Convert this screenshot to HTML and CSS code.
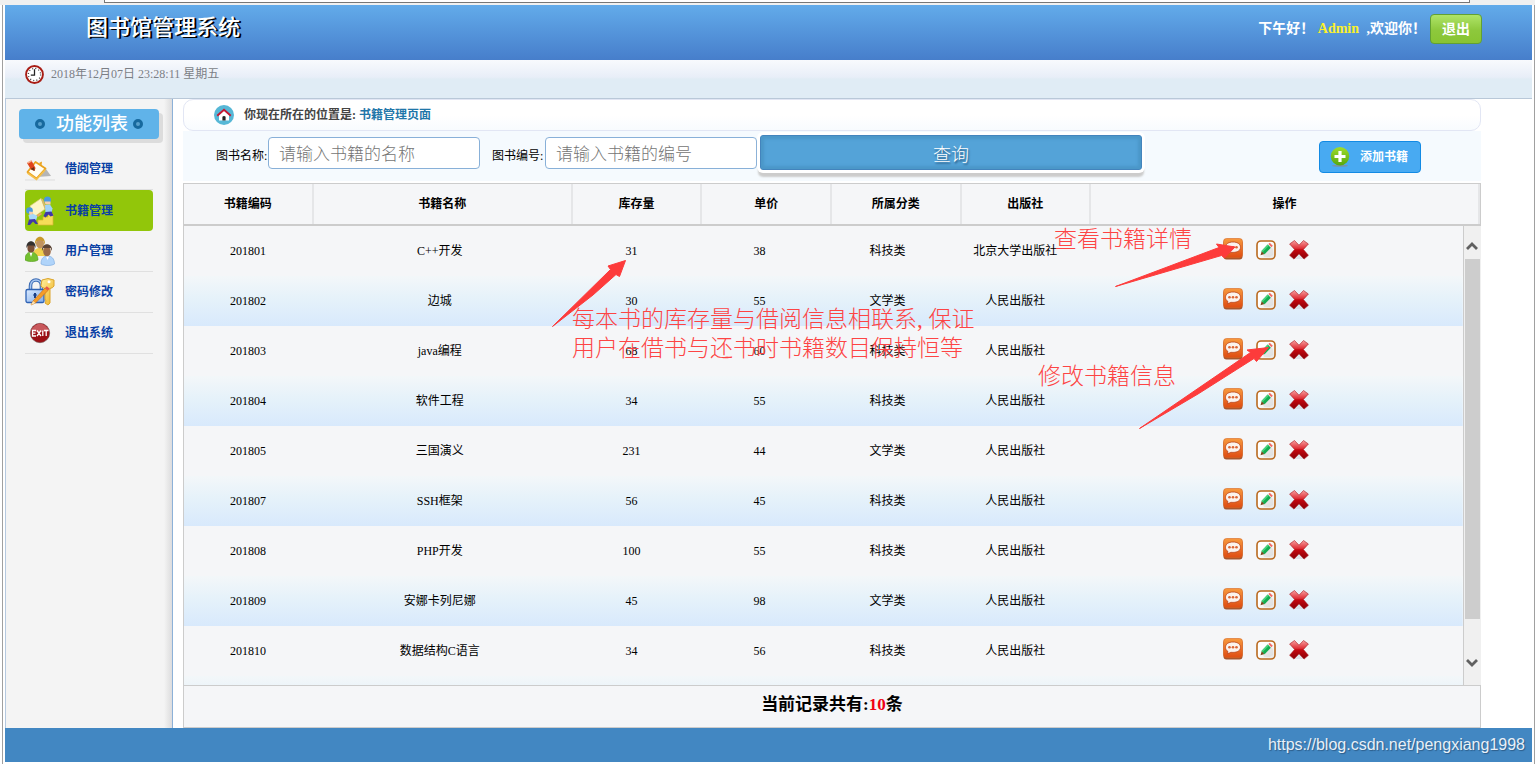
FILE: index.html
```html
<!DOCTYPE html>
<html lang="zh-CN">
<head>
<meta charset="utf-8">
<title>图书馆管理系统</title>
<link rel="stylesheet" href="styles.css">
</head>
<body>
<svg class="sprite" width="0" height="0" aria-hidden="true">
  <defs>
    <linearGradient id="orange" x1="0" y1="0" x2="0" y2="1"><stop offset="0" stop-color="#f79a3e"/><stop offset="1" stop-color="#df4c12"/></linearGradient>
    <linearGradient id="red" x1="0" y1="0" x2="0" y2="1"><stop offset="0" stop-color="#f6a0a0"/><stop offset=".42" stop-color="#e03038"/><stop offset=".5" stop-color="#c40810"/><stop offset="1" stop-color="#8a0006"/></linearGradient>
    <linearGradient id="green" x1="0" y1="0" x2="0" y2="1"><stop offset="0" stop-color="#9fdc2c"/><stop offset="1" stop-color="#56a80c"/></linearGradient>
    <linearGradient id="gold" x1="0" y1="0" x2="1" y2="1"><stop offset="0" stop-color="#fff0a0"/><stop offset="1" stop-color="#eeb020"/></linearGradient>
    <linearGradient id="steel" x1="0" y1="0" x2="1" y2="1"><stop offset="0" stop-color="#dcebff"/><stop offset="1" stop-color="#7fabea"/></linearGradient>
    <linearGradient id="paper" x1="0" y1="0" x2="1" y2="1"><stop offset=".4" stop-color="#fff"/><stop offset="1" stop-color="#e4e4e4"/></linearGradient>
    <symbol id="i-view" viewBox="0 0 20 22">
      <rect x="0.5" y="2" width="19" height="19.5" rx="3" fill="#a8552c"/>
      <rect x="0.5" y="0.5" width="19" height="19" rx="3" fill="url(#orange)" stroke="#d9641e" stroke-width=".6"/>
      <path d="M10 4c-4.800 0-7.500 2.300-7.500 5.300 0 1.900 1 3.400 2.500 4.300L4.500 16l3.300-1.700 2.200.1c4.800 0 7.500-2.200 7.500-5.100S14.800 4 10 4z" fill="#fbf3ee" stroke="#b9441c" stroke-width=".8"/>
      <circle cx="6.500" cy="9.300" r="1.300" fill="#dc6434"/><circle cx="10" cy="9.300" r="1.300" fill="#dc6434"/><circle cx="13.500" cy="9.300" r="1.300" fill="#dc6434"/>
    </symbol>
    <symbol id="i-edit" viewBox="0 0 20 20">
      <rect x="1" y="1" width="18" height="18" rx="4" fill="url(#paper)" stroke="#b9691f" stroke-width="1.600"/>
      <path d="M7 15l8-8 2 2v6l-3 2H8z" fill="#dadada" opacity=".6"/>
      <path d="M4.500 15.200l1.200-4.200 2.900 3z" fill="#7a4a20"/>
      <path d="M5.500 11l6.200-6.500 3.200 3.300-6.300 6.500z" fill="#14ac50"/><path d="M5.500 11l6.200-6.500 1.100 1.200-6 6.300z" fill="#48d47c"/>
      <path d="M12.300 4l1.500-1.300 3 3.100-1.400 1.400z" fill="#f06c68"/>
    </symbol>
    <symbol id="i-delete" viewBox="0 0 20 20">
      <path d="M4 19h12l-3-5H7z" fill="#cfd8e0" opacity=".6"/>
      <path d="M.6 4L5.500.5 10 5.200 14.500.5 19.400 4l-5 5.500 5 5.800-4.400 3.800-5-5.300-5 5.300-4.400-3.800 5-5.800z" fill="url(#red)" stroke="#a8141c" stroke-width=".6"/>
    </symbol>
  </defs>
</svg>

<div class="window">
  <div class="strip"><div class="strip-box"></div></div>
  <div class="app">
    <header class="top">
      <h1 class="brand">图书馆管理系统</h1>
      <p class="hello">下午好！ <span class="user">Admin</span> ,欢迎你！</p>
      <button class="logout" type="button">退出</button>
    </header>

    <div class="datebar">
      <svg class="clock" viewBox="0 0 18 18" aria-hidden="true">
        <circle cx="9" cy="9" r="8" fill="#fff" stroke="#a81c14" stroke-width="1.800"/>
        <circle cx="9" cy="9" r="5.800" fill="none" stroke="#444" stroke-width="1.200" stroke-dasharray="1 2.040"/>
        <path d="M9 4v5.500H5.500" fill="none" stroke="#222" stroke-width="1.200"/>
      </svg>
      <time>2018年12月07日 23:28:11 星期五</time>
    </div>

    <div class="middle">
      <aside class="side">
        <h2 class="side-title"><i class="dot"></i><span>功能列表</span><i class="dot"></i></h2>
        <nav class="menu">
          <a href="#"><svg viewBox="0 0 30 30" aria-hidden="true">
            <path d="M12 23l14-1-5-7z" fill="#b5b5b5"/><path d="M0 26h30" stroke="#ddd"/>
            <path d="M2.500 18l8-10 10 6.500-9 10z" fill="#fffdf2" stroke="#eaa21c" stroke-width="1.800" stroke-linejoin="round"/>
            <path d="M2.500 19l9 6.500L20 16" fill="none" stroke="#f5c04a" stroke-width="1.600"/>
            <path d="M14 9l3-1.500-.5 4z" fill="#eaa21c"/>
            <path d="M2 9l4.500-2.500 4 7.500-1 3-3.500-1.500z" fill="#e0451c"/><path d="M5.500 15l3.500-2 .6 4z" fill="#6a3418"/><path d="M2.500 9l4-2.200" stroke="#f7b090" stroke-width="1.500"/>
          </svg><span>借阅管理</span></a>
          <a href="#" class="current" aria-current="page"><svg viewBox="0 0 30 30" aria-hidden="true">
            <path d="M13 29V24h5v-3h5v-3h5v11z" fill="#f6dd58" stroke="#d8b430" stroke-width=".7"/>
            <path d="M5 10l11-7.500L20 13 9 21z" fill="#fdf5c6" stroke="#dccb80" stroke-width=".7"/><path d="M16 2.500l2 .8 4 9.700-2 .4z" fill="#d8b96c"/>
            <circle cx="22.500" cy="4" r="3.500" fill="#4a9be0"/><path d="M19.500 5.500h6v3h-5z" fill="#f7cfae"/><path d="M20 9l5-.5 2.500 4-1 5-6-.5z" fill="#9fd3f8"/><path d="M20.500 16l6-.5 2 4-3 1-2-2-3 3-2-1.500z" fill="#4038a8"/>
            <circle cx="4.500" cy="14.500" r="3.300" fill="#4a9be0"/><path d="M4 15.500l4 .5-.5 3-3 .5z" fill="#f7cfae"/><path d="M3.500 19l5-1 4 2-1.500 4.500-6 1z" fill="#a7d8fa"/><path d="M4 23.500l6-.5 3 5h-2.500L8 25.500 5 29H2.500z" fill="#4038a8"/><path d="M12 19l4-2 1 1-4 3z" fill="#f3a468"/>
          </svg><span>书籍管理</span></a>
          <a href="#"><svg viewBox="0 0 30 30" aria-hidden="true">
            <path d="M8 20c0-7 4-8 7-8s7 2 7 8z" fill="#f2d04c"/><ellipse cx="15" cy="7.500" rx="4" ry="5" fill="#c0925e"/><path d="M10 9c-1-11 11-11 10 0l-1.500-4q-3.500-1.500-7 0z" fill="#c8982c"/>
            <path d="M0 24c0-6 3-8 6-8s7 2 7 8c-3 2-10 2-13 0z" fill="#74c030" stroke="#4f9818" stroke-width=".6"/><path d="M4.500 16.500h3L6 21z" fill="#fff"/><ellipse cx="6" cy="12" rx="3.600" ry="4.500" fill="#7a5038"/><path d="M1.500 12c-1-9 10-9 9 0L9 9.500H3z" fill="#33302f"/>
            <path d="M16 28c0-6 3-8 6.500-8s7 2 7 8c-3 2-10 2-13.500 0z" fill="#b0d4fa" stroke="#78a8de" stroke-width=".6"/><path d="M21 20.500h3L22.500 24z" fill="#fff"/><ellipse cx="22" cy="15.500" rx="3.800" ry="4.800" fill="#9c6c48"/><path d="M17 15c-1-9 11-9 10 0l-1.500-3h-7z" fill="#5a4436"/>
          </svg><span>用户管理</span></a>
          <a href="#"><svg viewBox="0 0 30 30" aria-hidden="true">
            <path d="M5.500 14V9c0-8 11-8 11 0v5" fill="none" stroke="#3e6db4" stroke-width="3.600"/><path d="M5.500 14V9c0-8 11-8 11 0v5" fill="none" stroke="#a9c8f2" stroke-width="1.400"/>
            <rect x="1" y="12.500" width="18" height="13" rx="1.500" fill="url(#steel)" stroke="#2d62b4" stroke-width="1.300"/><path d="M10 16v5M8.500 18h3" stroke="#1b3f86" stroke-width="2"/>
            <path d="M17 3q6-3 12 0v6q-1 2-4 2.500V26l-2 2-3-2 1-2-1-2V11.500q-4-1-4-3z" fill="url(#gold)" stroke="#dba42c" stroke-width="1"/><circle cx="24" cy="4.800" r="1.500" fill="#fff"/>
            <path d="M8 24L20 11l3 2.500L10.500 26 6 28z" fill="#f59c28" stroke="#c46c10" stroke-width=".6"/><path d="M6 28l2-4 2.500 2z" fill="#f8e4b8"/><path d="M20 11l1.800-1.800 3 2.600L23 13.500z" fill="#e4574c"/>
          </svg><span>密码修改</span></a>
          <a href="#"><svg viewBox="0 0 30 30" aria-hidden="true">
            <circle cx="15" cy="15" r="9.700" fill="#9c1016" stroke="#6e5050" stroke-width=".6"/><path d="M6 12q9-13 18 0-9 4-18 0z" fill="#c8585c"/>
            <path d="M11 12.500H7.500v5.500H11M7.500 15.200h3M12 12.500l4 5.500M16 12.500l-4 5.500M17.800 12.500V18M19 12.500h4.500M21.200 12.500V18" fill="none" stroke="#fff" stroke-width="1.300"/>
          </svg><span>退出系统</span></a>
        </nav>
      </aside>

      <main class="content">
        <div class="crumb">
          <svg viewBox="0 0 20 20" aria-hidden="true"><circle cx="10" cy="10" r="10" fill="#56b7d6"/><path d="M5 10l5-4.500L15 10v5.500H5z" fill="#fff"/><path d="M3.200 10.800L10 4.800l6.800 6" fill="none" stroke="#c41a34" stroke-width="1.900"/><path d="M8.400 15.500v-3.700q1.600-1.800 3.200 0v3.700z" fill="#222"/></svg>
          <span>你现在所在的位置是: <a href="#">书籍管理页面</a></span>
        </div>

        <form class="search">
          <label for="bookName">图书名称:</label>
          <input id="bookName" type="text" placeholder="请输入书籍的名称">
          <label class="second" for="bookNo">图书编号:</label>
          <input id="bookNo" type="text" placeholder="请输入书籍的编号">
          <button class="query" type="button">查询</button>
          <a class="add" href="#"><svg viewBox="0 0 20 20" aria-hidden="true"><ellipse cx="10" cy="18.800" rx="8" ry="1" fill="#7694a8"/><circle cx="10" cy="9.300" r="9.200" fill="url(#green)"/><path d="M10 4v11M4.500 9.500h11" stroke="#fff" stroke-width="3.200"/></svg>添加书籍</a>
        </form>

        <table class="grid head">
          <colgroup><col class="c1"><col class="c2"><col class="c1"><col class="c1"><col class="c1"><col class="c1"><col class="c3"></colgroup>
          <thead><tr><th>书籍编码</th><th>书籍名称</th><th>库存量</th><th>单价</th><th>所属分类</th><th>出版社</th><th>操作</th></tr></thead>
        </table>

        <div class="scroller">
          <div class="rows">
            <table class="grid body">
              <colgroup><col class="c1"><col class="c2"><col class="c1"><col class="c1"><col class="c1"><col class="c1"><col class="c3"></colgroup>
              <tbody>
                <tr><td>201801</td><td>C++开发</td><td>31</td><td>38</td><td>科技类</td><td>北京大学出版社</td><td><div class="ops"><a href="#" aria-label="查看"><svg class="view"><use href="#i-view"/></svg></a><a href="#" aria-label="修改"><svg><use href="#i-edit"/></svg></a><a href="#" aria-label="删除"><svg><use href="#i-delete"/></svg></a></div></td></tr>
                <tr><td>201802</td><td>边城</td><td>30</td><td>55</td><td>文学类</td><td>人民出版社</td><td><div class="ops"><a href="#" aria-label="查看"><svg class="view"><use href="#i-view"/></svg></a><a href="#" aria-label="修改"><svg><use href="#i-edit"/></svg></a><a href="#" aria-label="删除"><svg><use href="#i-delete"/></svg></a></div></td></tr>
                <tr><td>201803</td><td>java编程</td><td>68</td><td>60</td><td>科技类</td><td>人民出版社</td><td><div class="ops"><a href="#" aria-label="查看"><svg class="view"><use href="#i-view"/></svg></a><a href="#" aria-label="修改"><svg><use href="#i-edit"/></svg></a><a href="#" aria-label="删除"><svg><use href="#i-delete"/></svg></a></div></td></tr>
                <tr><td>201804</td><td>软件工程</td><td>34</td><td>55</td><td>科技类</td><td>人民出版社</td><td><div class="ops"><a href="#" aria-label="查看"><svg class="view"><use href="#i-view"/></svg></a><a href="#" aria-label="修改"><svg><use href="#i-edit"/></svg></a><a href="#" aria-label="删除"><svg><use href="#i-delete"/></svg></a></div></td></tr>
                <tr><td>201805</td><td>三国演义</td><td>231</td><td>44</td><td>文学类</td><td>人民出版社</td><td><div class="ops"><a href="#" aria-label="查看"><svg class="view"><use href="#i-view"/></svg></a><a href="#" aria-label="修改"><svg><use href="#i-edit"/></svg></a><a href="#" aria-label="删除"><svg><use href="#i-delete"/></svg></a></div></td></tr>
                <tr><td>201807</td><td>SSH框架</td><td>56</td><td>45</td><td>科技类</td><td>人民出版社</td><td><div class="ops"><a href="#" aria-label="查看"><svg class="view"><use href="#i-view"/></svg></a><a href="#" aria-label="修改"><svg><use href="#i-edit"/></svg></a><a href="#" aria-label="删除"><svg><use href="#i-delete"/></svg></a></div></td></tr>
                <tr><td>201808</td><td>PHP开发</td><td>100</td><td>55</td><td>科技类</td><td>人民出版社</td><td><div class="ops"><a href="#" aria-label="查看"><svg class="view"><use href="#i-view"/></svg></a><a href="#" aria-label="修改"><svg><use href="#i-edit"/></svg></a><a href="#" aria-label="删除"><svg><use href="#i-delete"/></svg></a></div></td></tr>
                <tr><td>201809</td><td>安娜卡列尼娜</td><td>45</td><td>98</td><td>文学类</td><td>人民出版社</td><td><div class="ops"><a href="#" aria-label="查看"><svg class="view"><use href="#i-view"/></svg></a><a href="#" aria-label="修改"><svg><use href="#i-edit"/></svg></a><a href="#" aria-label="删除"><svg><use href="#i-delete"/></svg></a></div></td></tr>
                <tr><td>201810</td><td>数据结构C语言</td><td>34</td><td>56</td><td>科技类</td><td>人民出版社</td><td><div class="ops"><a href="#" aria-label="查看"><svg class="view"><use href="#i-view"/></svg></a><a href="#" aria-label="修改"><svg><use href="#i-edit"/></svg></a><a href="#" aria-label="删除"><svg><use href="#i-delete"/></svg></a></div></td></tr>
                <tr><td colspan="7"></td></tr>
              </tbody>
            </table>
          </div>
          <div class="bar" aria-hidden="true">
            <svg class="arrow up" viewBox="0 0 12 8"><path d="M1 7l5-5 5 5" fill="none" stroke="#606060" stroke-width="2.800"/></svg>
            <div class="thumb"></div><div class="rest"></div>
            <svg class="arrow down" viewBox="0 0 12 8"><path d="M1 1l5 5 5-5" fill="none" stroke="#606060" stroke-width="2.800"/></svg>
          </div>
        </div>

        <p class="total">当前记录共有:<span>10</span>条</p>

        <svg class="pointers" viewBox="183 99 1298 629" width="1298" height="629" aria-hidden="true">
          <g fill="#fd3b3b" stroke="#fd3b3b" stroke-width="1" stroke-linejoin="round">
            <path d="M552.500 326.500L610.500 269.500L608 266L625.500 260.500L619.500 276.500L616 274.500L593 295Z"/>
            <path d="M1115.500 286.500L1219 247.500L1216.500 244L1235 247L1224.500 258L1221.500 255.500Z"/>
            <path d="M1139.500 428.500L1250.500 352.500L1247 350L1268.500 347.500L1256.500 361.500L1254 358.500L1198 394Z"/>
          </g>
        </svg>
        <p class="note note-view">查看书籍详情</p>
        <p class="note note-stock">每本书的库存量与借阅信息相联系, 保证<br>用户在借书与还书时书籍数目保持恒等</p>
        <p class="note note-edit">修改书籍信息</p>
      </main>
    </div>

    <footer class="foot">https://blog.csdn.net/pengxiang1998</footer>
  </div>
</div>
</body>
</html>
```

FILE: styles.css
```css
* { box-sizing: border-box; }

body {
  margin: 0;
  background: #fff;
  color: #000;
  font: 12px/16px "Liberation Serif", "Noto Sans CJK SC", serif;
}

h1, h2, p { margin: 0; }
a { text-decoration: none; color: inherit; }
button, input { font-family: inherit; }
.sprite { position: absolute; }

.window {
  display: flex;
  flex-direction: column;
  height: 100vh;
  min-height: 600px;
}

.strip {
  flex: none;
  height: 5px;
  padding: 0 65px 0 104px;
  background: #f0f0f0;
}
.strip-box {
  height: 3px;
  background: #fff;
  border: 1px solid #777;
  border-top: 0;
}

.app {
  flex: 1;
  min-height: 0;
  display: flex;
  flex-direction: column;
  padding: 0 2px 2px;
  border-left: 1px solid #a0a0a0;
  border-right: 1px solid #a0a0a0;
  margin-left: 2px;
}

.top {
  flex: none;
  display: flex;
  align-items: flex-start;
  height: 55px;
  padding: 0 50px 0 81px;
  background: linear-gradient(#62abea, #477ecb);
  color: #fff;
}
.brand {
  margin-right: auto;
  padding-top: 7px;
  font-size: 22px;
  line-height: 32px;
  font-weight: 500;
  text-shadow: 2px 1px 0 #000;
}
.hello {
  padding: 14px 4px 0 0;
  font-size: 14px;
  line-height: 20px;
  font-weight: bold;
}
.user { margin-right: 4px; color: #fbf02c; }
.logout {
  margin-top: 9px;
  width: 52px;
  height: 30px;
  padding: 0 0 2px;
  border: 1px solid #62a033;
  border-radius: 4px;
  background: linear-gradient(#aee468, #8dc83c 55%, #88c432);
  color: #fff;
  font-size: 14px;
  font-weight: bold;
}

.datebar {
  flex: none;
  display: flex;
  align-items: center;
  gap: 7px;
  height: 39px;
  padding: 0 20px 10px;
  border-bottom: 1px solid #b9c8d8;
  background: linear-gradient(#f8fafd, #e8eef8 45%, #e0ecf5 50%);
  color: #7b7f86;
}
.clock { width: 19px; height: 19px; }

.middle { flex: 1; min-height: 0; display: flex; }

.side {
  flex: none;
  width: 168px;
  padding: 10px 13px 0;
  border-left: 1px solid #b5c9e0;
  border-right: 1px solid #8cb1d8;
  background: linear-gradient(to left, #dcdcde, #e8e8e8 4px, #f4f4f4 8px);
}
.side-title {
  display: flex;
  align-items: center;
  height: 30px;
  padding-left: 16px;
  border-radius: 4px;
  background: #60b3e9;
  box-shadow: 4px 4px 0 #dcdcdc;
  color: #fff;
  font-size: 18px;
  line-height: 28px;
  font-weight: 500;
}
.side-title span { margin: 0 5px 0 11px; }
.dot {
  width: 10px;
  height: 10px;
  border: 3px solid #17699e;
  border-radius: 50%;
  background: #58a0cc;
}
.menu { padding: 10px 6px 0; }
.menu a {
  display: flex;
  align-items: center;
  gap: 10px;
  height: 41px;
  border-bottom: 1px solid #e0e0e0;
  color: #0840a4;
  font-weight: bold;
}
.menu svg { width: 30px; height: 30px; }
.menu .current {
  border: 0;
  border-radius: 4px;
  background: #92c60a;
}

.content {
  position: relative;
  flex: 0 0 85%;
  min-width: 0;
  margin-left: 10px;
  display: flex;
  flex-direction: column;
}

.crumb {
  flex: none;
  display: flex;
  align-items: center;
  gap: 10px;
  height: 32px;
  padding-left: 30px;
  border: 1px solid #e2e6f4;
  border-radius: 10px;
  background: linear-gradient(#fff 50%, #f8fbfe);
  color: #444;
  font-weight: bold;
}
.crumb svg { width: 20px; height: 20px; }
.crumb a { color: #1f76a9; }

.search {
  flex: none;
  display: flex;
  align-items: flex-start;
  height: 50px;
  margin-bottom: 2px;
  padding: 4px 60px 0 33px;
  background: #f5fafe;
}
.search label { flex: none; width: 52px; padding-top: 13px; }
.search .second { width: 53px; margin-left: 12px; }
.search input {
  flex: none;
  width: 212px;
  height: 32px;
  margin-top: 2px;
  padding: 3px 10px 0;
  border: 1px solid #88b0d8;
  border-radius: 4px;
  background: #fff;
  font-size: 17px;
}
.search input::placeholder { color: #757575; font-weight: 300; }
.query {
  flex: 0 1 382px;
  height: 35px;
  margin-left: 3px;
  padding: 0;
  border: 1px solid #4384bd;
  border-radius: 3px;
  background: #54a3d8;
  box-shadow: inset 0 0 3px 3px #4b97c8, 0 0 0 3px #fff, 0 5px 2px 2px #ccc;
  color: #fff;
  font-size: 18px;
  font-weight: 300;
  text-shadow: 1px 2px 2px #2a5a80;
}
.add {
  flex: none;
  display: flex;
  align-items: center;
  gap: 10px;
  width: 102px;
  height: 32px;
  margin: 6px 0 0 auto;
  padding-left: 10px;
  border: 1px solid #128ae4;
  border-radius: 4px;
  background: #48aaf2;
  color: #fff;
  font-weight: bold;
}
.add svg { width: 20px; height: 20px; }

.grid {
  width: 100%;
  table-layout: fixed;
  border-collapse: separate;
  border-spacing: 0;
  text-align: center;
}
.c1 { width: 10%; }
.c2 { width: 20%; }
.c3 { width: 30%; }
.grid th, .grid td { padding: 0; }

.head {
  flex: none;
  border: 1px solid #ccc;
  background: #f5f6f8;
}
.head th { height: 40px; border-right: 2px solid #e5e6e8; }

.scroller {
  flex: 1;
  min-height: 0;
  display: flex;
  border: 1px solid #ccc;
  border-width: 1px 0 0 1px;
}
.rows { flex: 1; overflow: hidden; border-right: 1px solid #ccc; }
.body td { height: 50px; }
.body tr { background: #f5f6f8; }
.body tr:nth-child(even) { background: linear-gradient(#f3f7f9, #e4f1fa 50%, #d8e9fc); }
.ops {
  display: flex;
  align-items: flex-end;
  justify-content: center;
  gap: 13px;
  padding: 0 10px 4px 0;
}
.ops svg { display: block; width: 20px; height: 20px; }
.ops .view { height: 22px; }

.bar {
  flex: none;
  width: 17px;
  display: flex;
  flex-direction: column;
  align-items: center;
  background: #f0f0f0;
}
.arrow { flex: none; width: 12px; height: 8px; margin: 16px 0 9px; }
.thumb { flex: 12; width: 15px; background: #cdcdcd; }
.rest { flex: 1; }
.down { margin: 10px 0 18px; }

.total {
  flex: none;
  height: 43px;
  border: 1px solid #ccc;
  background: #f5f6f8;
  font-size: 17px;
  line-height: 38px;
  font-weight: 600;
  text-align: center;
}
.total span { color: #f00014; }

.pointers { position: absolute; left: 0; top: 0; pointer-events: none; }
.note {
  position: absolute;
  color: #fd4444;
  font-size: 23px;
  line-height: 29px;
  font-weight: 300;
  white-space: nowrap;
}
.note-view { left: 871px; top: 126px; }
.note-stock { left: 389px; top: 206px; }
.note-edit { left: 855px; top: 263px; }

.foot {
  flex: none;
  height: 34px;
  padding-right: 7px;
  background: #4287c2;
  color: #e8f0f8;
  font: 16px/34px "Liberation Sans", sans-serif;
  text-align: right;
  text-shadow: 1px 1px 1px #2c5c88;
}
```
